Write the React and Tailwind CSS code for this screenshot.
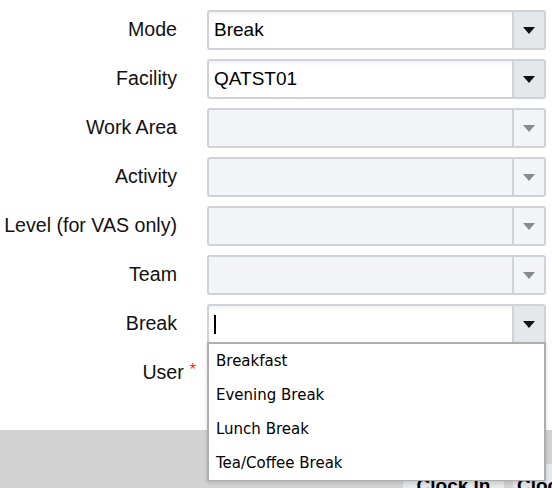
const rows = [
  { label: 'Mode', value: 'Break', enabled: true },
  { label: 'Facility', value: 'QATST01', enabled: true },
  { label: 'Work Area', value: '', enabled: false },
  { label: 'Activity', value: '', enabled: false },
  { label: 'Level (for VAS only)', value: '', enabled: false },
  { label: 'Team', value: '', enabled: false },
]

const options = ['Breakfast', 'Evening Break', 'Lunch Break', 'Tea/Coffee Break']

function Caret({ enabled }) {
  return (
    <svg width="12" height="7" viewBox="0 0 12 7">
      <path d="M0 0h12L6 7z" fill={enabled ? '#111' : '#8a8a8a'} />
    </svg>
  )
}

function Combo({ value, enabled, cursor }) {
  return (
    <div
      className={`flex h-10 w-[339px] overflow-hidden rounded-[3px] border-2 border-[#cdd3d9] ${
        enabled ? 'bg-white shadow-[inset_0_4px_4px_-2px_rgba(0,0,0,0.06)]' : 'bg-[#f3f4f6]'
      }`}
    >
      <div className="flex flex-1 items-center pl-[5px] text-[19px] text-black">
        {cursor && <span className="h-[19px] w-[2px] bg-black" />}
        {value}
      </div>
      <div
        className={`flex w-[32px] items-center justify-center border-l-2 border-[#cdd3d9] ${
          enabled ? 'bg-[#e4e8eb]' : 'bg-[#f3f4f6]'
        }`}
      >
        <Caret enabled={enabled} />
      </div>
    </div>
  )
}

function Row({ label, children }) {
  return (
    <div className="flex h-10 items-center">
      <div className="w-[178px] pr-px text-right text-[19.6px] text-[#111]">{label}</div>
      <div className="ml-[29px]">{children}</div>
    </div>
  )
}

export default function App() {
  return (
    <div
      className="relative h-[488px] w-[552px] overflow-hidden bg-white"
      style={{ fontFamily: '"Liberation Sans", Arial, sans-serif' }}
    >
      <div className="flex flex-col gap-[9px] pt-[10px]">
        {rows.map((r) => (
          <Row key={r.label} label={r.label}>
            <Combo value={r.value} enabled={r.enabled} />
          </Row>
        ))}
        <Row label="Break">
          <Combo value="" enabled cursor />
        </Row>
        <div className="flex h-10 items-center">
          <div className="flex w-[196px] items-start justify-end text-[19.6px] text-[#111]">
            <span>User</span>
            <span className="ml-[6px] mt-[4px] text-[16px] leading-none text-[#ff2020]">*</span>
          </div>
        </div>
      </div>

      <div className="mt-[37px] flex h-[80px] items-start gap-[9px] bg-[#d3d3d3] pl-[403px] pt-[34px]">
        <div className="flex h-[44px] w-[101px] shrink-0 items-center justify-center bg-[#e4e8eb] text-[19px] font-bold text-black">
          Clock In
        </div>
        <div className="flex h-[44px] w-[101px] shrink-0 items-center justify-start bg-[#e4e8eb] pl-[4px] text-[19px] font-bold text-black">
          Clock Out
        </div>
      </div>

      <div
        className="absolute left-[207px] top-[342px] w-[339px] border-2 border-b border-[#aeaeae] bg-white shadow-[0_2px_4px_rgba(0,0,0,0.15)]"
        style={{ fontFamily: '"DejaVu Sans", Tahoma, sans-serif' }}
      >
        {options.map((o) => (
          <div key={o} className="flex h-[34px] items-center pl-[7px] text-[15px] text-black">
            {o}
          </div>
        ))}
      </div>
    </div>
  )
}
